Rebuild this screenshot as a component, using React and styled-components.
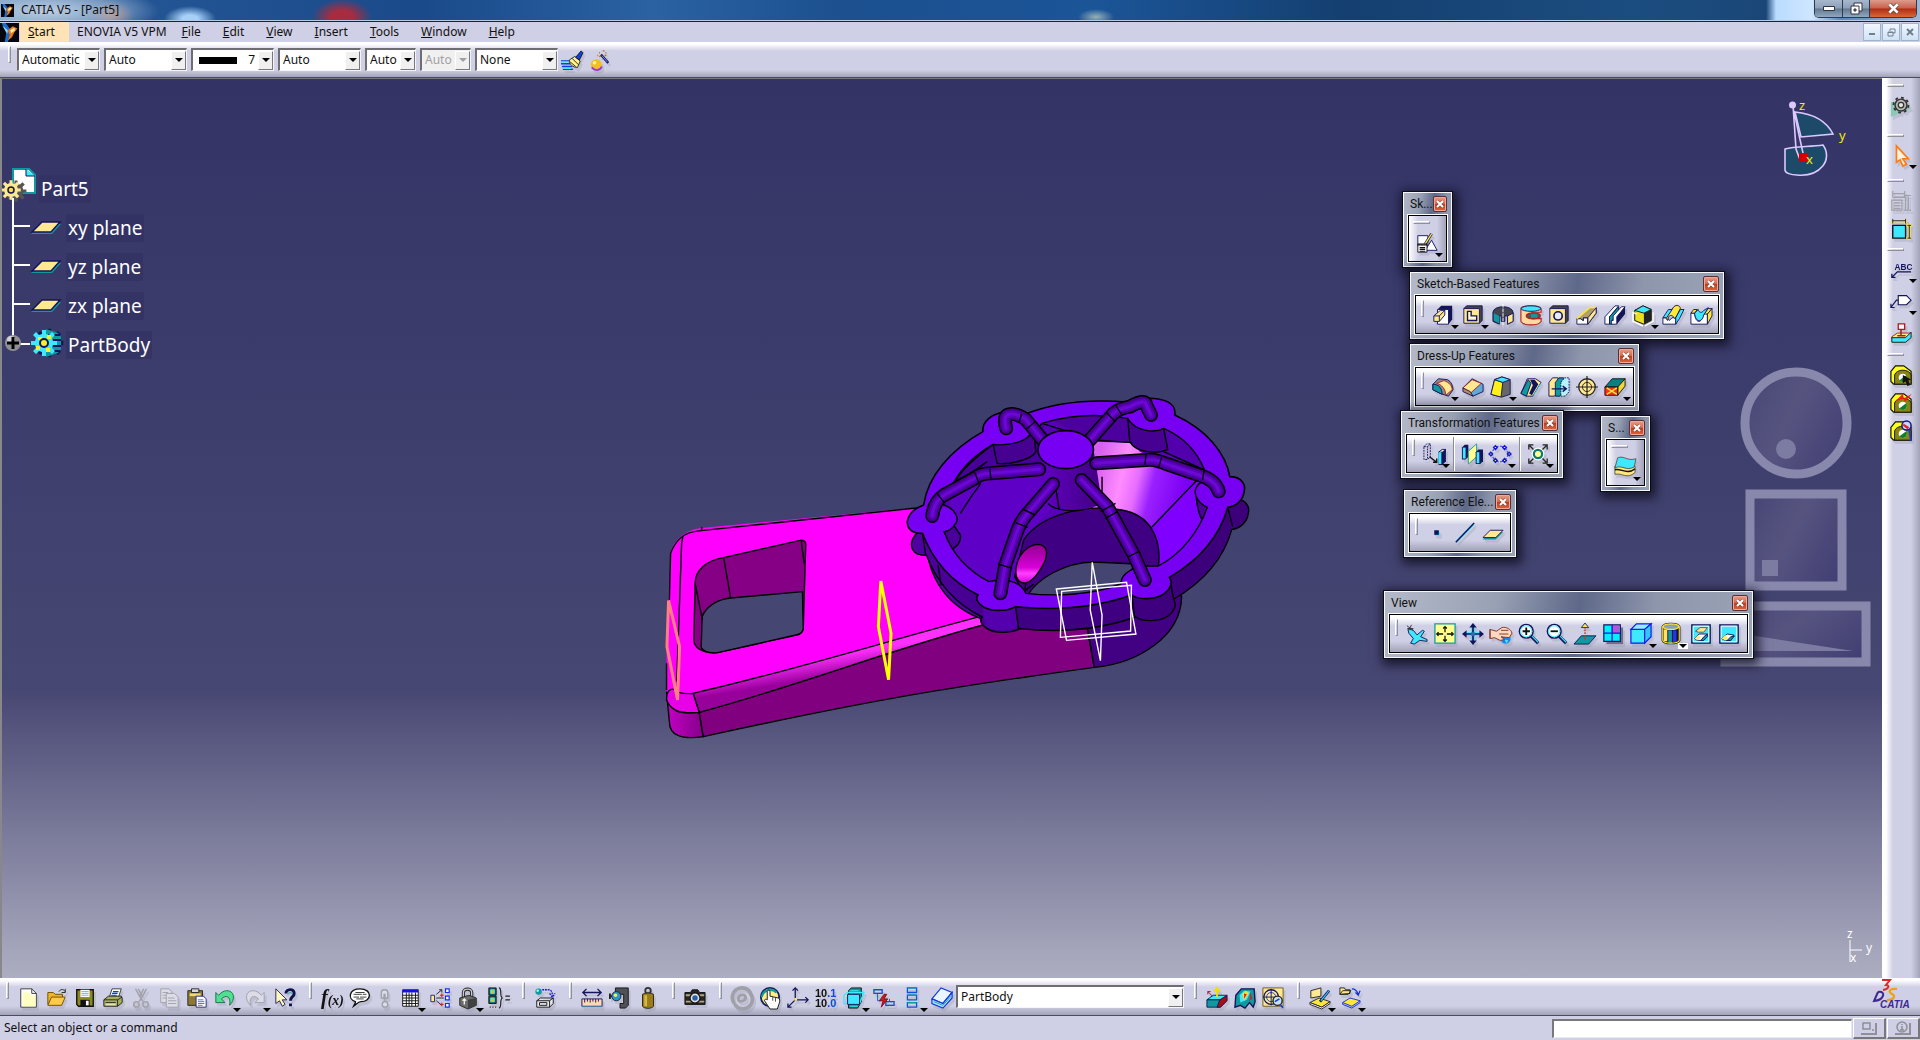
import React from 'react';
import styled, { createGlobalStyle, css } from 'styled-components';

const GlobalStyle = createGlobalStyle`
  * { box-sizing: border-box; }
  body {
    margin: 0;
    overflow: hidden;
    font-family: "Noto Sans", "Open Sans", sans-serif;
    font-size: 12px;
    color: #111;
  }
  button, select, input { font: inherit; color: inherit; }
`;

/* ---------- icons, all on a 24 x 24 grid ---------- */

const N = '#14145a';
const C = '#40e8ff';
const T = '#109aa0';
const Y = '#ffee88';
const G = '#a0a0a8';

const icons = {
  logo: (
    <>
      <path d="M0 0h24v24H0z" fill="#05070c" />
      <path d="M2 0h5l6 8-3 16H6L8 12z" fill="#1d6cd0" />
      <path d="M3 3l7 6-1 5z" fill="#8fd4ff" />
      <path d="M10 9l6-5 6 3-4 5-3 6-5 4 2-7z" fill="#e87a1c" />
      <path d="M13 9l5-3 1 3-5 4z" fill="#fff0b0" />
    </>
  ),
  newFile: (
    <>
      <path d="M3 2h12l5 5v15H3z" fill="#fff" stroke="#333" />
      <path d="M5 6h8v3h6v12H5z" fill="#ffffc0" />
      <path d="M15 2v5h5" fill="none" stroke="#333" />
    </>
  ),
  open: (
    <>
      <path d="M2 19V6h6l2 2h8v3" fill="#f0b428" stroke="#6b4a00" />
      <path d="M2 20l4-9h15l-4 9z" fill="#ffc94a" stroke="#6b4a00" />
      <path d="M14 5c2-3 5-3 7 0M21 2v4h-4" fill="none" stroke="#222" />
    </>
  ),
  save: (
    <>
      <path d="M3 3h18v18H5l-2-2z" fill="#8a8a1c" stroke="#111" strokeWidth="1.5" />
      <path d="M7 3h10v8H7z" fill="#fff" />
      <path d="M8 5h8M8 7h8M8 9h8" stroke="#6ab0e8" />
      <path d="M7 14h10v7H7z" fill="#111" />
      <path d="M13 15h3v5h-3z" fill="#fff" />
    </>
  ),
  print: (
    <>
      <path d="M8 11l3-9h10l-3 9z" fill="#fff" stroke="#333" />
      <path d="M12 5h6M11 7h6M10 9h6" stroke="#1238e0" strokeWidth="1.3" />
      <path d="M2 14l5-4h14l1 2v5l-5 4H2z" fill="#a8b060" stroke="#222" />
      <path d="M2 14h15l5-3M17 14v7M4 17h11" fill="none" stroke="#222" />
      <path d="M4 18h11v2H4z" fill="#e8e8a0" />
    </>
  ),
  cut: (
    <g fill="none" stroke={G} strokeWidth="1.5">
      <path d="M6 2l8 14M9 2l5 9M18 2l-8 14M15 2l-5 9" />
      <circle cx="7" cy="19" r="3" fill="#c4c4d0" />
      <circle cx="17" cy="19" r="3" fill="#c4c4d0" />
    </g>
  ),
  copy: (
    <g fill="#dcdce8" stroke={G}>
      <path d="M3 2h9l3 3v12H3z" />
      <path d="M9 7h9l4 4v11H9z" />
      <path d="M5 6h6M5 9h4M5 12h4M11 12h7M11 15h9M11 18h9" fill="none" />
    </g>
  ),
  paste: (
    <>
      <path d="M2 4h16v16H2z" fill="#8c7a34" stroke="#222" />
      <path d="M6 2h8v4H6z" fill="#d8d8d8" stroke="#222" />
      <path d="M4 7h12v3H4z" fill="#f0d878" />
      <path d="M11 10h8l3 3v9H11z" fill="#fff" stroke="#1c2880" />
      <path d="M13 14h6M13 16h7M13 18h7M13 20h5" stroke="#4a68d8" />
    </>
  ),
  undo: (
    <path d="M2 6v11h10l-4-4c5-5 11-3 9 7 7-7 5-16-3-16-4 0-7 3-9 5z" fill="#50e090" stroke="#147048" />
  ),
  redo: (
    <path d="M22 6v11H12l4-4c-5-5-11-3-9 7-7-7-5-16 3-16 4 0 7 3 9 5z" fill="#dcdce8" stroke={G} />
  ),
  whatsThis: (
    <>
      <path d="M2 2v16l4-3 3 6 3-2-3-5h5z" fill="#fff8c0" stroke="#20204a" />
      <path d="M13 7c0-5 9-6 9 0 0 4-4 3-4 8M18 18v3" fill="none" stroke="#10104a" strokeWidth="3.2" />
      <path d="M15 8c1-3 5-2 5 0" fill="none" stroke={T} />
    </>
  ),
  fx: (
    <text x="0" y="18" fontFamily="Liberation Serif, serif" fontStyle="italic" fontWeight="700" fontSize="22" fill="#111">
      f<tspan fontSize="15" dy="2">(x)</tspan>
    </text>
  ),
  bubble: (
    <>
      <path d="M12 2c14 0 13 14 1 14-3 0-5 3-8 5 1-2 2-3 2-5C-2 13 0 2 12 2z" fill="#fff" stroke="#111" strokeWidth="1.5" />
      <path d="M7 6h10M5 8h9M15 8h4M5 11h6M12 11h7M8 13h8" stroke="#333" />
    </>
  ),
  link: (
    <g fill="#dcdce8" stroke={G} strokeWidth="1.5">
      <path d="M8 12V6c0-4 7-4 7 0v6h-3V8h-1v4z" />
      <circle cx="12" cy="19" r="3" />
      <path d="M12 12v4" />
    </g>
  ),
  table: (
    <>
      <path d="M4 3h17v18H4z" fill="#fff" stroke="#111" />
      <path d="M4 3h17v3H4z" fill="#1010f0" />
      <path d="M4 9h17M4 12h17M4 15h17M4 18h17M8 6v15M11 6v15M14 6v15M18 6v15" stroke="#111" />
    </>
  ),
  relations: (
    <>
      <path d="M2 9h4v7H2z" fill="#ffee88" stroke="#20208a" />
      <path d="M18 2h4v4h-4zM18 10h4v4h-4zM18 18h4v4h-4z" fill="#fff" stroke="#1030e8" strokeWidth="1.3" />
      <path d="M8 8l6-5M11 3h3v3M8 12h8M8 15l6 5" fill="none" stroke="#222" />
      <path d="M12 9h4M14 7v4M12 19h4M14 17v4" stroke="#d01010" />
    </>
  ),
  lock: (
    <>
      <path d="M7 12V6c0-5 9-5 9 0v5" fill="none" stroke="#222" strokeWidth="3.5" />
      <path d="M7 12V6c0-5 9-5 9 0v5" fill="none" stroke="#ccc" strokeWidth="1.5" />
      <path d="M3 12l10-3 8 3v8l-9 4-9-4z" fill="#6c6c6c" stroke="#222" />
      <path d="M12 14v10l9-4v-8z" fill="#404040" />
      <path d="M8 14v5M6 15l2-2 2 2" fill="none" stroke="#eee" strokeWidth="1.5" />
    </>
  ),
  brace: (
    <>
      <path d="M2 1h8v8H2zM2 10h8v8H2z" fill="#186868" stroke="#111" />
      <path d="M4 3h4v4H4zM4 12h4v4H4z" fill="#e8c020" stroke={C} />
      <path d="M3 22h1M6 22h1M9 22h1" stroke="#111" strokeWidth="1.5" />
      <path d="M13 1c4 0 0 10 4 11-4 1 0 10-4 11M20 10h5M20 14h5" fill="none" stroke="#222" strokeWidth="1.3" />
    </>
  ),
  catalog: (
    <>
      <circle cx="5" cy="5" r="3.5" fill={T} />
      <circle cx="4" cy="4" r="1.3" fill="#b0ffff" />
      <path d="M9 3h6c4 0 5 2 5 7M17 7l3 4 3-4" fill="none" stroke="#1010e0" strokeWidth="1.4" strokeDasharray="2 1" />
      <path d="M3 15l4-3h14v6l-4 4H3zM3 15h14l4-3M17 15v7M6 17h8v3H6z" fill="#e8e8f0" stroke="#111" />
    </>
  ),
  ruler: (
    <>
      <path d="M2 6h20M6 2L2 6l4 4M18 2l4 4-4 4" fill="none" stroke={N} strokeWidth="1.4" />
      <path d="M1 13h22v8H1z" fill="#ffd8b8" stroke={N} />
      <path d="M4 13v4M7 13v3M10 13v4M13 13v3M16 13v4M19 13v3" stroke={N} />
      <path d="M1 22h22" stroke={C} />
    </>
  ),
  clamp: (
    <>
      <path d="M7 1h14v19l-3 3h-6v-5h4V8H7z" fill="#505058" stroke="#111" />
      <path d="M1 10h5M1 7v6" stroke="#222" strokeWidth="2" />
      <circle cx="8" cy="10" r="5" fill="#2898c8" stroke="#223" />
      <circle cx="7" cy="9" r="2" fill="#ffe860" />
    </>
  ),
  weight: (
    <>
      <circle cx="12" cy="4" r="3" fill="none" stroke="#333" strokeWidth="2" />
      <path d="M6 8c2-2 10-2 12 0v13c-2 3-10 3-12 0z" fill="#9a7c18" stroke="#222" />
      <path d="M8 9h3v12H8z" fill="#d8b840" />
    </>
  ),
  camera: (
    <>
      <path d="M1 6h6l2-3h6l2 3h6v13H1z" fill="#26262a" stroke="#111" />
      <path d="M2 8h20v2H2zM2 15h20v2H2z" fill="#b0a878" />
      <circle cx="12" cy="12" r="5.500" fill="#e0e0e8" stroke="#111" strokeWidth="1.4" />
      <circle cx="12" cy="12" r="3" fill="#2a60a8" />
    </>
  ),
  update: (
    <g fill="none" stroke={G} strokeLinecap="round">
      <path d="M3 17A10 10 0 0 1 21 6M21 7A10 10 0 0 1 5 20" strokeWidth="4" />
      <path d="M8 13c0-5 7-6 8-2M16 11c0 5-7 6-8 3" strokeWidth="3" />
    </g>
  ),
  hand: (
    <>
      <circle cx="12" cy="11" r="10" fill="#ffee88" stroke="#18205a" strokeWidth="2" />
      <path d="M3 11c1-7 10-11 16-5" fill="none" stroke={T} strokeWidth="2.5" />
      <path d="M9 14V5c0-2 3-2 3 0v5l9 2c2 1 2 3 1 6l-2 6h-8l-6-9c0-2 2-2 3-1z" fill="#fff" stroke="#111" />
      <path d="M15 11v4M18 12v4" stroke="#444" />
    </>
  ),
  axis: (
    <>
      <path d="M9 14V1M6 4l3-3 3 3M9 14h14M20 11l3 3-3 3M9 14l-8 8M1 18v4h4" fill="none" stroke={N} strokeWidth="1.4" />
      <path d="M8 12h3v3H8z" fill="#ffe860" />
    </>
  ),
  decimals: (
    <g fontFamily="Liberation Sans, sans-serif" fontWeight="700" fontSize="12">
      <text x="0" y="11" fill="#111">10<tspan fill="#1048d8">.1</tspan></text>
      <text x="0" y="22" fill="#111">10<tspan fill="#1048d8">.0</tspan></text>
    </g>
  ),
  cyanPart: (
    <>
      <path d="M6 4l3-3h11v15l-4 7H6z" fill={T} stroke="#111" />
      <path d="M1 9l4-3h18l-5 12H1z" fill="none" stroke={C} strokeWidth="1.4" />
      <path d="M5 8h13v11H5z" fill={C} stroke={N} />
      <path d="M8 4h9M16 21H8" stroke={C} />
    </>
  ),
  bolt: (
    <>
      <path d="M1 3h9v4H1zM14 16h9v4h-9z" fill="none" stroke="#1050c8" strokeWidth="1.4" />
      <path d="M5 7v8h4M18 16v-3" fill="none" stroke="#1050c8" />
      <path d="M12 8l-5 7h4l-2 7 7-9h-4l3-5z" fill="#d81818" stroke="#701010" />
    </>
  ),
  stack: (
    <g fill="none" stroke="#1050e0" strokeWidth="1.4">
      <path d="M7 1h10v5H7zM7 9h10v5H7zM7 17h10v5H7z" />
      <path d="M7 1h10M7 9h10M7 17h10" stroke={T} />
    </g>
  ),
  book: (
    <>
      <path d="M1 13L11 1l12 5-10 12z" fill="#e8f4ff" stroke="#1038e0" strokeWidth="1.3" />
      <path d="M1 13v5l12 5 10-11V6L13 18 1 13" fill="#b8e8f8" stroke="#1038e0" strokeWidth="1.3" />
      <path d="M3 16l10 4 9-10" fill="none" stroke={T} />
    </>
  ),
  draft1: (
    <>
      <path d="M1 14l7-5h15l-6 5z" fill={C} stroke={N} />
      <path d="M1 14h14v8H1z" fill={T} stroke={N} />
      <path d="M12 22l3-8 8-5v6l-7 7z" fill="#a01018" stroke={N} />
      <path d="M12 11V2M9 5l3-4 3 4" fill="none" stroke="#f0e000" strokeWidth="2" />
      <path d="M7 10L2 5M2 8V5h3" fill="none" stroke="#a01018" />
    </>
  ),
  curvature: (
    <>
      <path d="M2 9l6-7h14l1 14-2 6-4-5-5 6-5-3-6 2z" fill={T} stroke={N} strokeWidth="1.5" />
      <path d="M6 9l5-5 7 1-4 9-7 3z" fill={C} />
      <path d="M9 8l4-4 3 3-5 8z" fill="#ffe030" />
      <path d="M11 7l3 1-3 5zM18 5l2 8-3 2z" fill="#d82020" />
    </>
  ),
  tap: (
    <>
      <path d="M1 1h22v20H1z" fill="#ffe890" stroke="#6a5a20" />
      <circle cx="10" cy="11" r="8" fill="none" stroke={N} strokeWidth="1.4" />
      <circle cx="10" cy="11" r="5" fill="none" stroke="#1040e0" />
      <path d="M10 2v18M1 11h18" stroke={N} />
      <circle cx="17" cy="15" r="5" fill="#c8e0f0" stroke="#222" strokeWidth="1.5" />
      <path d="M14 16l5-3M20 19l3 4" stroke="#1040e0" strokeWidth="1.8" />
    </>
  ),
  paint: (
    <>
      <path d="M2 12V4l11-3v9z" fill="#ffe890" stroke="#222" />
      <path d="M1 17l10-5 12 4-9 6z" fill="#ffe838" stroke="#222" />
      <path d="M1 17v2l13 5 9-6v-2l-9 6z" fill="#fff" stroke="#222" />
      <path d="M12 16l10-12" stroke={N} strokeWidth="3" />
      <path d="M13 15l9-11" stroke="#30c0f0" strokeWidth="1.3" />
    </>
  ),
  replace: (
    <>
      <path d="M1 8V1h5l1 2h5v4zM1 8l3-4h9l-3 4z" fill="#ffe890" stroke="#222" />
      <path d="M14 2c4 0 6 3 7 6M18 6l3 3 2-5" fill="none" stroke="#1030d8" strokeWidth="1.3" />
      <path d="M4 17l8-5 11 3-9 6z" fill="#ffe838" stroke="#1030d8" />
      <path d="M4 17v2l10 4 9-6v-2" fill="none" stroke="#1030d8" />
    </>
  ),
  brush: (
    <>
      <path d="M0 12h11M0 15h10M1 18h11M2 21h11" stroke="#1040e0" strokeWidth="1.4" />
      <path d="M0 13h9M2 20h9" stroke={C} strokeWidth="1.4" />
      <path d="M9 11l6-4 6 5-3 7c-5 0-9-3-9-8z" fill="#fff090" stroke="#222" />
      <path d="M12 9l7 7M10 13l6 5" stroke="#222" />
      <path d="M16 8l6-7 2 2-4 8z" fill="#1040e0" stroke="#111" />
    </>
  ),
  wand: (
    <>
      <circle cx="8" cy="16" r="6" fill="#f0c020" />
      <circle cx="6" cy="14" r="2" fill="#fff490" />
      <path d="M3 19c3 4 9 4 11-1" fill="none" stroke="#a030e0" strokeWidth="2" />
      <path d="M13 5l8 9" stroke={N} strokeWidth="2.6" />
      <path d="M14 6l6 7" stroke="#78a0ff" />
      <path d="M11 3h1M15 1h2M18 3h1M13 7h-2M17 6h2M10 6h-1" stroke="#c07030" strokeWidth="1.5" />
    </>
  ),
  sketch: (
    <>
      <path d="M2 4h11v11H2z" fill="#fff" stroke={N} />
      <path d="M17 9l6 11H10z" fill="#fff" stroke={N} />
      <path d="M10 13l7-11" stroke="#222" strokeWidth="3" />
      <path d="M10 13l7-11" stroke="#ffe870" strokeWidth="1.3" />
      <path d="M2 13h10v9H2z" fill="#fff" stroke="#111" />
      <path d="M2 14h10M4 17h6M4 19h6M4 21h6" stroke="#111" strokeWidth="1.3" />
    </>
  ),
  pad: (
    <>
      <path d="M6 6l4-4h12v15l-4 5z" fill={N} />
      <path d="M6 6h12v16H6z" fill="#fff" stroke={N} />
      <path d="M2 13l7-6h5v5l-6 7H2z" fill="#ffe890" stroke={N} />
      <path d="M2 13h6v6M8 13l6-6" fill="none" stroke={N} />
    </>
  ),
  pocket: (
    <>
      <path d="M2 5l3-3h17v16l-3 3z" fill="#444" stroke={N} />
      <path d="M2 5h17v16H2z" fill="#ffe890" stroke={N} />
      <path d="M6 8h4v5h6v5H6z" fill="#fff8c8" stroke={N} strokeWidth="1.5" />
    </>
  ),
  shaft: (
    <>
      <path d="M1 9c1-8 21-8 22 0v10l-6 3v-9h-3v6h-4v-6H8v9l-7-3z" fill="#444450" stroke={N} />
      <path d="M2 10l6 3v8l-6-3z" fill={T} />
      <path d="M17 13l6-3v9l-6 3z" fill="#ffe890" stroke={N} />
      <path d="M12 0v23" stroke="#fff" strokeDasharray="4 1" />
    </>
  ),
  groove: (
    <>
      <path d="M1 5c2-4 20-4 22 0v4H13v7h10v3c-3 5-19 5-22 0z" fill="#ffd8a0" stroke="#b02020" strokeWidth="1.2" />
      <path d="M1 5c2-4 20-4 22 0-2 4-20 4-22 0z" fill={C} stroke={N} />
      <path d="M7 12c3-3 12-3 15 0v2c-3 3-12 3-15 0z" fill="#555" stroke="#b02020" strokeWidth="1.3" />
      <path d="M12 11h7v4h-7z" fill={T} />
    </>
  ),
  hole: (
    <>
      <path d="M2 5l3-3h17v16l-3 3z" fill="#444" stroke={N} />
      <path d="M2 5h17v16H2z" fill="#ffe890" stroke={N} />
      <circle cx="11" cy="13" r="4.5" fill="#e8e8ff" stroke={N} strokeWidth="1.8" />
    </>
  ),
  rib: (
    <>
      <path d="M1 16h4l3 2v-3h5v7H1z" fill="#fff" stroke={N} />
      <path d="M1 16L15 4h7v6l-9 12v-7H8v3l-3-2z" fill="#b0a068" stroke={N} />
      <path d="M1 16L15 4h7" stroke="#ffe838" strokeWidth="1.8" fill="none" />
      <path d="M13 15l9-11v6l-9 12z" fill="#ffe890" stroke={N} />
    </>
  ),
  slot: (
    <>
      <path d="M1 14L12 2h4L6 14v8H1z" fill="#fff" stroke={N} />
      <path d="M6 14L16 3v5L9 18v4H6z" fill={T} stroke={N} />
      <path d="M10 13l9-10h4L14 14v8H8v-4h2z" fill="#fff" stroke={N} />
      <path d="M14 14l9-11v8l-9 11z" fill={N} />
    </>
  ),
  stiffener: (
    <>
      <path d="M3 7l9-5 9 4v12l-8 4-10-4z" fill="#e8e020" stroke="#111" />
      <path d="M3 7l9-5 9 4-8 4z" fill={C} stroke="#111" />
      <path d="M13 10l8-4v12l-8 4z" fill="#222" />
      <path d="M1 9v10l11 5M23 9v10l-9 5M1 9l4 2" fill="none" stroke="#fff" strokeWidth="1.5" />
    </>
  ),
  loftAdd: (
    <>
      <path d="M1 15h5l2 3 3-3h4v7H1z" fill="#fff" stroke={N} />
      <path d="M4 15L13 3c3-3 7-1 7 2l-4 8-2 3c-3-5-7-5-8 2z" fill="#ffe838" stroke={N} />
      <path d="M15 15l5-9h4l-5 10-4 6zM1 15l6-9h4l-6 9z" fill={C} stroke={N} />
    </>
  ),
  loftCut: (
    <>
      <path d="M1 10h4c1 12 8 12 10 0h4v12H1z" fill="#fff" stroke={N} />
      <path d="M1 10l3-4h4l-3 4zM15 11l5-6h4l-5 6z" fill="#ffe838" stroke={N} />
      <path d="M19 11l5-6v8l-5 9z" fill="#ffe838" stroke={N} />
      <path d="M5 10l4-4c1 4 4 4 6 1l5-3-5 8c-2 9-9 8-10-2z" fill={C} stroke={N} />
    </>
  ),
  fillet: (
    <>
      <path d="M1 9l6-6 10 1c4 2 6 7 6 11l-5 7-9-3-8-4z" fill="#8c8c90" stroke={N} />
      <path d="M1 9c7 0 10 5 10 11l-10-5z" fill={T} stroke={N} />
      <path d="M5 8l8-3c6 2 9 6 9 10l-7 6c0-7-5-12-10-13z" fill="#ffe890" stroke="#b02020" />
    </>
  ),
  chamfer: (
    <>
      <path d="M1 13L11 3l12 6v8l-11 5z" fill="#60a8d8" stroke={N} />
      <path d="M1 13L11 4l10 4-12 11z" fill="#ffe890" stroke="#b02020" />
      <path d="M1 13l8 4 3 5-11-5z" fill="#c08858" stroke={N} />
    </>
  ),
  draftAngle: (
    <>
      <path d="M5 4l8-3 9 3v16l-9 3-12-3z" fill="#666" stroke={N} />
      <path d="M5 4l9 3-2 16-11-3z" fill="#fff018" stroke={N} />
      <path d="M5 4l8-3 9 3-8 3z" fill={C} stroke={N} />
    </>
  ),
  shell: (
    <>
      <path d="M1 19L8 3h9l6 4-9 15H7z" fill="#ffe890" stroke={N} />
      <path d="M1 19L9 4l3 4-5 14z" fill={T} stroke={N} />
      <path d="M11 4h5l4 5-7 12-3-2 4-9z" fill={N} />
      <path d="M15 21l8-13" stroke={C} />
    </>
  ),
  thickness: (
    <>
      <path d="M1 7l4-5h6v15l-4 5H1z" fill="#ffe890" stroke={N} />
      <path d="M8 7l4-5h5v15l-4 5H8z" fill={T} stroke={N} />
      <path d="M14 7l4-5h5v15l-4 5h-5z" fill="#b8f0ff" stroke={N} strokeDasharray="2 1" />
      <path d="M4 14h16M16 11l4 3-4 3" fill="none" stroke={N} strokeWidth="1.5" />
    </>
  ),
  thread: (
    <>
      <circle cx="12" cy="12" r="9" fill="#ffe890" stroke="#222" strokeWidth="1.4" />
      <circle cx="12" cy="12" r="5" fill="none" stroke="#222" />
      <path d="M12 0v24M0 12h24" stroke="#222" strokeWidth="1.3" />
    </>
  ),
  removeFace: (
    <>
      <path d="M1 12l8-9h14l-7 9z" fill="#0a8080" stroke="#111" />
      <path d="M15 12l8-9v8l-8 10z" fill="#f0d838" stroke="#111" />
      <path d="M1 12h14v9H1z" fill="#ff3018" stroke="#111" />
      <path d="M3 13l11 7M14 13L3 20" stroke="#ffe838" strokeWidth="1.5" />
    </>
  ),
  translate: (
    <>
      <path d="M1 4l3-3h4v14l-3 3H1zM1 4h4v14M5 4l3-3" fill="none" stroke={N} strokeDasharray="2 1" />
      <path d="M17 10l4-3h4v13l-4 4h-4z" fill={N} />
      <path d="M17 10l4-3h4l-4 3z" fill="#fff" stroke={N} />
      <path d="M17 10h3v13h-3z" fill={C} />
      <path d="M7 15l8 6M15 17v4h-4" fill="none" stroke="#111" strokeWidth="1.5" />
    </>
  ),
  mirror: (
    <>
      <path d="M1 5l3-3h4v13l-3 3H1z" fill={N} />
      <path d="M2 5h3v12H2z" fill={C} />
      <path d="M8 9l9-8v14l-9 8z" fill="#ffff90" stroke={T} />
      <path d="M16 10l3-3h5v13l-3 3h-5z" fill={N} />
      <path d="M17 10h3v12h-3z" fill={C} />
    </>
  ),
  pattern: (
    <>
      <circle cx="12" cy="12" r="8.5" fill="none" stroke="#1018d0" strokeDasharray="3 2" />
      <g fill="#ffee60" stroke="#1018d0" strokeWidth="1.5">
        <path d="M2 10l2 2-2 2-2-2zM22 10l2 2-2 2-2-2zM7 3l2 2-2 2-2-2zM17 3l2 2-2 2-2-2zM7 17l2 2-2 2-2-2zM17 17l2 2-2 2-2-2z" />
      </g>
    </>
  ),
  scale: (
    <>
      <path d="M3 3l18 18M21 3L3 21M2 7V2h5M17 2h5v5M22 17v5h-5M7 22H2v-5" fill="none" stroke="#222" strokeWidth="1.4" />
      <circle cx="12" cy="12" r="7" fill="#fff" />
      <circle cx="12" cy="12" r="4.500" fill="#ffff90" stroke="#087878" strokeWidth="2.4" />
    </>
  ),
  surface: (
    <>
      <path d="M1 11c7-3 11 6 22 0v7c-9 8-14 0-22 2z" fill="#ffe878" stroke="#555" />
      <path d="M4 2c7-3 10 4 20 1l-2 9c-9 5-13-3-21 1z" fill={C} stroke="#555" />
      <path d="M1 15c7-2 12 6 22-1" fill="none" stroke="#111" strokeWidth="1.5" />
    </>
  ),
  point: (
    <>
      <path d="M10 10h5v5h-5z" fill={C} />
      <path d="M9 9h5v5H9z" fill={N} />
    </>
  ),
  line: (
    <>
      <path d="M3 21L21 3" stroke={C} strokeWidth="2.6" />
      <path d="M2 22L22 1" stroke={N} strokeWidth="1.6" />
    </>
  ),
  plane: (
    <>
      <path d="M1 19l8-8h14l-8 8z" fill={T} />
      <path d="M1 17l8-8h14l-8 8z" fill="#ffe890" stroke={N} />
    </>
  ),
  fly: (
    <>
      <path d="M2 6l6 2 4 5 6-5 2 1-4 6 7 3v2l-8-1-6 4-4-1 3-5-5-6z" fill={C} stroke={N} />
      <path d="M1 3l7 5M6 2L3 8M2 6h6" stroke="#333" />
    </>
  ),
  fitAll: (
    <>
      <path d="M1 1h22v21H1z" fill="#ffff90" stroke={T} strokeWidth="1.4" />
      <path d="M12 4v6M10 6l2-2 2 2M12 14v6M10 18l2 2 2-2M3 12h7M5 10l-2 2 2 2M14 12h7M19 10l2 2-2 2" fill="none" stroke="#111" strokeWidth="1.4" />
    </>
  ),
  pan: (
    <>
      <path d="M12 2v20M2 12h20" stroke={C} strokeWidth="4" />
      <path d="M12 2v20M2 12h20" stroke={N} strokeWidth="1.8" />
      <path d="M12 0l4 5H8zM12 24l4-5H8zM0 12l5-4v8zM24 12l-5-4v8z" fill={N} />
      <path d="M10 10h4v4h-4z" fill="#3070b0" />
    </>
  ),
  rotate: (
    <>
      <circle cx="17" cy="17" r="5.5" fill="#1888f0" />
      <path d="M0 7l7 2 6-4c5-1 10 2 11 6l-3 5-9-1 4 3-5 1-6-3-5 1z" fill="#ffd8c0" stroke="#7a3020" />
      <path d="M10 12h10M12 8h8M0 7v10" stroke="#7a3020" />
      <path d="M16 18l4 1-2 3z" fill="#60e8f0" />
    </>
  ),
  zoomIn: (
    <>
      <path d="M14 14l8 8" stroke={N} strokeWidth="3.6" />
      <path d="M15 14l7 7" stroke={C} strokeWidth="1.2" />
      <circle cx="9" cy="9" r="7.500" fill="#fff" stroke={N} strokeWidth="1.6" />
      <circle cx="9" cy="9" r="6" fill="none" stroke={C} />
      <path d="M5 9h8M9 5v8" stroke="#111" strokeWidth="2" />
    </>
  ),
  zoomOut: (
    <>
      <path d="M14 14l8 8" stroke={N} strokeWidth="3.6" />
      <path d="M15 14l7 7" stroke={C} strokeWidth="1.2" />
      <circle cx="9" cy="9" r="7.500" fill="#fff" stroke={N} strokeWidth="1.6" />
      <circle cx="9" cy="9" r="6" fill="none" stroke={C} />
      <path d="M5 9h8" stroke="#111" strokeWidth="2" />
    </>
  ),
  normalView: (
    <>
      <path d="M0 23l8-9h16l-8 9z" fill={T} stroke={N} />
      <path d="M12 18V4" stroke="#d03020" strokeDasharray="2 1" strokeWidth="1.4" />
      <path d="M12 0l4 5H8z" fill="#ffe838" stroke="#1018d0" />
    </>
  ),
  multiView: (
    <>
      <path d="M5 5h18v18H5z" fill="#70708a" />
      <path d="M2 2h18v18H2z" fill="#00f0ff" stroke={N} strokeWidth="1.3" />
      <path d="M11 3h8v8h-8z" fill="#c050d8" />
      <path d="M11 2v18M2 11h18" stroke="#1018d0" strokeWidth="1.4" />
    </>
  ),
  isoView: (
    <g stroke="#1018f0" strokeWidth="1.3">
      <path d="M1 7h15v15H1z" fill={C} />
      <path d="M1 7l6-6h16l-7 6z" fill="#90f0ff" />
      <path d="M16 7l7-6v14l-7 7z" fill="#30c8f0" />
    </g>
  ),
  shading: (
    <>
      <path d="M3 4c2-4 16-4 18 0v15c-2 4-16 4-18 0z" fill="#101048" stroke="#111" strokeWidth="2.5" />
      <path d="M3 4c2-4 16-4 18 0-2 4-16 4-18 0z" fill="#88a0c0" stroke="#ffe838" strokeWidth="1.4" />
      <path d="M4 7h4v13H4z" fill="#ffe060" />
      <path d="M9 8h4v14H9z" fill={T} />
      <path d="M14 8h4v13h-4z" fill="#2038e0" />
      <path d="M3 4v15c2 4 16 4 18 0V4" fill="none" stroke="#ffe838" strokeWidth="1.2" />
    </>
  ),
  hideShow: (
    <>
      <path d="M2 2h20v20H2z" fill={C} stroke={N} strokeWidth="1.5" />
      <path d="M3.500 3.500h17v17h-17z" fill="none" stroke="#fff" />
      <path d="M6 9l5-4h8l-4 5H9z" fill="#ffe890" stroke="#555" />
      <path d="M5 17l5-5h9l-5 7H8z" fill="#fff" stroke={N} />
      <path d="M12 19l3-4 4-3v3l-4 4z" fill={T} stroke={N} />
      <path d="M5 17l4-4 3 2-3 4z" fill="#ffe890" />
    </>
  ),
  swapSpace: (
    <>
      <path d="M2 2h20v20H2z" fill={C} stroke={N} strokeWidth="1.5" />
      <path d="M3.500 3.500h17v17h-17z" fill="none" stroke="#fff" />
      <path d="M4 17l6-5 7 1-3 6H8z" fill="#fff" stroke={N} />
      <path d="M10 19l4-4 4-1-4 5z" fill={T} stroke={N} />
      <path d="M4 17l4-4 3 3-3 3z" fill="#ffee60" />
    </>
  ),
  gear: (
    <>
      <path d="M1 7l23 7-23 10z" fill="#8cc8b8" />
      <circle cx="12" cy="11" r="6.500" fill="#b8b8b0" stroke="#333" strokeWidth="1.6" />
      <circle cx="12" cy="11" r="8.200" fill="none" stroke="#333" strokeWidth="2" strokeDasharray="3 3.400" />
      <circle cx="12" cy="11" r="3" fill="#e0e8e4" stroke="#333" strokeWidth="1.4" />
    </>
  ),
  select: (
    <path d="M7 1v18l4-3 3 7 4-2-4-6h6z" fill="#fff0e0" stroke="#ff7a10" strokeWidth="1.8" />
  ),
  dimGray: (
    <g fill="none" stroke={G} strokeWidth="1.3">
      <path d="M3 1v7M16 1v7M3 4h13M15 6h8M15 22h8M20 7v14M17 8v14" />
      <path d="M3 8h14M2 11h11v11H2zM4 14h7M4 17h7M4 20h7" />
    </g>
  ),
  dim: (
    <>
      <path d="M3 8h14v14H3z" fill={C} stroke="#111" strokeWidth="1.5" />
      <path d="M3 1v5M17 1v5M3 3h14M21 8v14M18 8h5M18 22h5" fill="none" stroke="#ffe838" strokeWidth="3" />
      <path d="M3 1v5M17 1v5M3 3h14M21 8v14M19 8h4M19 22h4" fill="none" stroke={N} />
    </>
  ),
  abc: (
    <>
      <text x="5" y="12" fontFamily="Liberation Sans, sans-serif" fontWeight="700" fontSize="9" fill={N}>ABC</text>
      <path d="M23 14H8l-6 6M2 16v4h4" fill="none" stroke={N} strokeWidth="1.4" />
    </>
  ),
  flag: (
    <>
      <path d="M9 5h9l5 5-5 5H9z" fill="#fff" stroke={N} strokeWidth="1.2" />
      <path d="M9 10H7l-6 8M1 14v4h4" fill="none" stroke={N} strokeWidth="1.3" />
    </>
  ),
  stamp: (
    <>
      <path d="M2 15l6-4h15l-6 6H2z" fill={Y} stroke="#b01818" />
      <path d="M2 16h15l6-6v6l-6 5H2z" fill={C} stroke="#111" />
      <path d="M9 1h7v6H9z" fill="#fff" stroke="#b01818" strokeWidth="1.4" />
      <path d="M12 7v6M8 14h9" stroke="#b01818" strokeWidth="1.6" />
    </>
  ),
  tape: (
    <>
      <path d="M1 8l5-6h9l8 6v14H4l-3-3z" fill="#ffff20" stroke="#111" strokeWidth="1.3" />
      <path d="M5 22V12c2-7 16-7 18 0v10z" fill="#8a8410" stroke="#111" />
      <circle cx="14" cy="15" r="4.500" fill="#fff" />
      <path d="M10 18l8-6c2 6-3 10-8 6z" fill="#108028" />
    </>
  ),
};

icons.tapeSelect = (
  <>
    {icons.tape}
    <path d="M14 12l9 5-3 1 2 5-3 1-2-5-3 2z" fill="#111" />
  </>
);
icons.tapeBolt = (
  <>
    {icons.tape}
    <path d="M6 10l8-8 1 5 9-5-8 9-1-4z" fill="#ff1818" />
  </>
);
icons.tapeLens = (
  <>
    {icons.tape}
    <circle cx="18" cy="6" r="5" fill="#c8d8f8" stroke="#101890" strokeWidth="1.6" />
    <path d="M15 4l6 4-2 2-5-4z" fill="#e82020" />
    <path d="M21 11l2 12" stroke="#2038c0" strokeWidth="2" />
  </>
);

const Icon = ({ name, size = 22 }) => (
  <svg width={size} height={size} viewBox="0 0 24 24" aria-hidden="true">
    {icons[name]}
  </svg>
);

/* ---------- frame ---------- */

const Screen = styled.div`
  display: flex;
  flex-direction: column;
  height: 100vh;
  background: #cfcfe5;
`;

const TitleBar = styled.header`
  display: flex;
  align-items: flex-start;
  height: 22px;
  padding-right: 3px;
  border-bottom: 1px solid #15233f;
  box-shadow: inset 0 -1px #b9cbe4;
  background:
    radial-gradient(ellipse 110px 24px at 50px 11px, rgba(205, 219, 235, 0.85), rgba(180, 200, 225, 0.5) 60%, transparent),
    radial-gradient(ellipse 22px 14px at 112px 15px, rgba(205, 125, 85, 0.8), transparent),
    radial-gradient(ellipse 26px 13px at 190px 19px, #a5d0f8 30%, transparent),
    radial-gradient(ellipse 30px 18px at 342px 17px, #a82c40 35%, transparent),
    radial-gradient(ellipse 18px 8px at 1096px 17px, rgba(180, 200, 190, 0.8), transparent),
    linear-gradient(90deg, transparent 1766px, #b9dcff 1776px, #cfe6ff 1812px, #5e86b8 1840px, #9db8d6 100%),
    linear-gradient(90deg, #6c93bd, #235493 8%, #1a4a8a 22%, #2a62a2 34%, #1c508f 44%, #1b5598 57%, #143f70 70%, #1c4d80 85%, #173f6d);
`;

const TitleText = styled.h1`
  flex: 1;
  margin: 0;
  font-size: 12px;
  line-height: 20px;
  font-weight: 400;
`;

const LogoBox = styled.span`
  display: flex;
  padding: 4px 7px 0 1px;
`;

const FrameButtons = styled.div`
  display: flex;
  height: 18px;
  border: 1px solid #2c3a50;
  border-top: 0;
  border-radius: 0 0 5px 5px;
  overflow: hidden;
`;

const FrameButton = styled.button`
  display: flex;
  align-items: center;
  justify-content: center;
  width: ${(p) => (p.$close ? 47 : 27)}px;
  padding: 0;
  border: 0;
  border-left: ${(p) => (p.$first ? 0 : 1)}px solid #2c3a50;
  background: ${(p) =>
    p.$close
      ? 'linear-gradient(#dc9c8c, #c8604c 48%, #b02c14 52%, #d86838)'
      : 'linear-gradient(#a8b8cc, #8ca0b8 48%, #62788f 52%, #90a8c0)'};
`;

const MenuBar = styled.nav`
  display: flex;
  align-items: center;
  height: 20px;
  padding-right: 1px;
`;

const MenuLogo = styled.span`
  display: flex;
  width: 20px;
`;

const MenuItem = styled.button`
  height: 20px;
  padding: 0 ${(p) => (p.$tight ? 7 : 14)}px 0 8px;
  border: 0;
  line-height: 20px;
  background: ${(p) => (p.$active ? '#ffe2b5' : 'transparent')};
`;

const ChildButtons = styled.div`
  display: flex;
  gap: 1px;
  margin-left: auto;
`;

const ChildButton = styled.button`
  display: flex;
  align-items: center;
  justify-content: center;
  width: 18px;
  height: 18px;
  padding: 0;
  border: 1px solid #9cb4cc;
  background: linear-gradient(#f0f7ff, #cfe2f4);
`;

const Strip = styled.div`
  display: flex;
  align-items: center;
  height: ${(p) => (p.$top ? 36 : 38)}px;
  padding-left: ${(p) => (p.$top ? 2 : 0)}px;
  border-bottom: 1px solid #4c4c58;
  background: linear-gradient(#ffffff 2px, #f2f2f9 4px, #cfcfe5 9px, #cfcfe5 28px, #a2a2b8 100%);
`;

const Grip = styled.span`
  width: 3px;
  height: 17px;
  flex: none;
  align-self: flex-start;
  margin: 4px 6px 0 ${(p) => (p.$lead ? 6 : 10)}px;
  border: 1px solid #fff;
  border-right-color: #909098;
  border-bottom-color: #909098;
`;

const Tool = styled.button`
  position: relative;
  flex: none;
  display: flex;
  align-items: center;
  width: ${(p) => (p.$narrow ? 22 : p.$menu ? 30 : 28)}px;
  height: 30px;
  padding: 2px 0 0 ${(p) => (p.$narrow ? 0 : 3)}px;
  border: 0;
  background: none;

  svg {
    overflow: visible;
    filter: drop-shadow(2px 3px 0 rgba(130, 130, 150, 0.22));
  }

  ${(p) =>
    p.$menu &&
    css`
      &::after {
        content: '';
        position: absolute;
        right: 0;
        bottom: 0;
        border: 4px solid transparent;
        border-top-color: #000;
        border-bottom: 0;
      }
    `}

  ${(p) =>
    p.$boxed &&
    css`
      &::after {
        box-shadow: 0 0 0 1px #fff;
        background: #fff;
        border-left-color: #fff;
        border-right-color: #fff;
      }
    `}
`;

const Divider = styled.span`
  width: 2px;
  height: 34px;
  margin: 0 3px;
  border-left: 1px solid #8c8c98;
  border-right: 1px solid #fff;
`;

/* ---------- combo boxes ---------- */

const ComboBox = styled.span`
  display: grid;
  align-items: center;
  width: ${(p) => p.$width}px;
  height: 23px;
  margin-right: ${(p) => (p.$last ? 0 : 4)}px;
  border: 2px solid #6e6e72;
  border-right: 1px solid #f4f4fa;
  border-bottom: 1px solid #f4f4fa;
  background: ${(p) => (p.$off ? '#f0f0f0' : '#fff')};
  color: ${(p) => (p.$off ? '#a0a0a4' : '#111')};

  > * { grid-area: 1 / 1; }
`;

const Select = styled.select`
  appearance: none;
  width: 100%;
  height: 20px;
  padding: 0 ${(p) => (p.$right ? 18 : 0)}px 0 3px;
  border: 0;
  outline: 0;
  background: transparent;
  text-align: ${(p) => (p.$right ? 'right' : 'left')};
  line-height: 18px;
  opacity: 1;
`;

const ComboArrow = styled.span`
  justify-self: end;
  display: flex;
  align-items: center;
  justify-content: center;
  width: 15px;
  height: 19px;
  border: 1px solid #fff;
  border-right-color: #77777c;
  border-bottom-color: #77777c;
  background: #f0f0f0;
  pointer-events: none;

  &::after {
    content: '';
    border: 4px solid transparent;
    border-top-color: ${(p) => (p.$off ? '#a0a0a4' : '#000')};
    border-bottom: 0;
  }
`;

const WeightBar = styled.span`
  width: 38px;
  height: 7px;
  margin-left: 6px;
  background: #000;
`;

const Combo = ({ label, value, width, off, weight, last }) => (
  <ComboBox $width={width} $off={off} $last={last}>
    <Select aria-label={label} disabled={off} $right={weight} defaultValue={value}>
      <option>{value}</option>
    </Select>
    {weight && <WeightBar />}
    <ComboArrow $off={off} />
  </ComboBox>
);

const ToolItem = ({ item }) => {
  const [name, label, kind] = item;
  return (
    <Tool
      type="button"
      aria-label={label}
      title={label}
      $menu={kind === 'menu' || kind === 'boxed'}
      $boxed={kind === 'boxed'}
      $narrow={kind === 'narrow'}
    >
      <Icon name={name} />
    </Tool>
  );
};

/* ---------- viewport ---------- */

const Middle = styled.div`
  flex: 1;
  display: flex;
  min-height: 0;
`;

const Viewport = styled.main`
  position: relative;
  flex: 1;
  overflow: hidden;
  border-top: 1px solid #77777c;
  border-left: 2px solid #88888c;
  background: linear-gradient(#333366, #474773 68%, #aeaec2);
`;

const Tree = styled.ul`
  position: relative;
  width: 200px;
  margin: 0;
  padding: 90px 0 0;
  list-style: none;
  color: #fff;
  font-size: 19px;
`;

const TreeRow = styled.li`
  display: flex;
  align-items: center;
  height: 39px;
`;

const TreeLabel = styled.span`
  padding: 1px 2px;
  border-radius: 2px;
  background: rgba(48, 48, 98, 0.7);
  line-height: 26px;
  white-space: nowrap;
`;

const TreeGlyph = styled.svg`
  flex: none;
  width: ${(p) => (p.$root ? 37 : 64)}px;
  height: 39px;
  overflow: visible;
`;

const ModelLayer = styled.svg`
  position: absolute;
  left: 638px;
  top: 301px;
  width: 640px;
  height: 370px;

  .edge { fill: none; stroke: #000; }
  path, ellipse, polygon { vector-effect: non-scaling-stroke; }
`;

const RightLayer = styled.svg`
  position: absolute;
  right: 0;
  top: ${(p) => p.$top}px;
  overflow: visible;
`;

const CornerAxis = styled.svg`
  position: absolute;
  right: 6px;
  bottom: 12px;
  overflow: visible;
`;

const ring =
  'M655 425C658 400 672 385 695 375C705 290 760 210 840 155C838 125 860 102 893 96C915 88 930 92 943 103C1020 65 1110 57 1200 67L1235 55C1285 52 1315 70 1310 105C1390 150 1435 220 1445 290C1475 290 1485 315 1480 335C1478 360 1460 380 1440 382C1420 470 1370 540 1297 592C1310 615 1290 652 1250 655C1225 658 1210 650 1205 645C1110 685 1010 692 920 680C900 695 860 695 840 680C825 668 822 655 828 645C770 610 720 550 692 460C665 460 655 445 655 425Z';

const bowl =
  'M745 455C765 520 800 570 855 605C900 590 935 610 945 640C1020 650 1110 645 1178 612C1178 580 1210 560 1240 558L1270 558C1330 520 1370 450 1390 382C1370 372 1355 345 1362 325C1366 312 1375 305 1385 300L1383 270C1365 215 1330 170 1283 145C1265 158 1215 158 1195 115C1120 100 1050 105 985 130L955 165C940 190 890 198 865 193C820 225 790 260 770 305C748 340 740 350 738 372C775 385 785 420 770 435C765 450 750 455 745 455Z';

const arms = [
  'M990 185L945 118Q915 95 900 105Q890 112 897 145',
  'M1102 180L1160 100Q1175 85 1200 80Q1240 55 1240 75L1252 105',
  'M1118 250L1240 240Q1260 236 1290 252L1370 285Q1410 300 1418 334',
  'M1082 300L1145 380L1210 525L1237 600',
  'M1012 312L950 400Q935 420 925 450L895 555L883 640',
  'M978 268L860 280Q835 280 820 295L745 345Q720 365 716 408',
];

const joints =
  'M968 125L947 147M935 102L928 128M1142 97L1165 125M1165 75L1182 108M1240 222L1237 255M1278 232L1270 265M1383 265L1378 300M1165 370L1128 395M1170 395L1140 415M1222 515L1197 530M937 387L968 405M920 428L950 442M877 552L912 565M857 265L860 298M820 277L830 308M728 340L745 367';

const Model = () => (
  <ModelLayer viewBox="0 0 1568 1110" preserveAspectRatio="none" role="img" aria-label="Part5 solid" strokeWidth="1.4">
    <defs>
      <linearGradient id="cone" x1="1110" y1="300" x2="1330" y2="345" gradientUnits="userSpaceOnUse">
        <stop offset="0" stopColor="#d860f0" />
        <stop offset="0.3" stopColor="#ff8cff" />
        <stop offset="0.48" stopColor="#e66cff" />
        <stop offset="0.65" stopColor="#9a20ff" />
        <stop offset="1" stopColor="#7c00f4" />
      </linearGradient>
      <linearGradient id="roll" x1="400" y1="840" x2="412" y2="900" gradientUnits="userSpaceOnUse">
        <stop offset="0" stopColor="#ff30ff" />
        <stop offset="1" stopColor="#98009c" />
      </linearGradient>
      <linearGradient id="corner">
        <stop offset="0" stopColor="#c400c4" />
        <stop offset="1" stopColor="#84008a" />
      </linearGradient>
      <linearGradient id="slotFace" x2="0" y2="1">
        <stop offset="0" stopColor="#900090" />
        <stop offset="0.6" stopColor="#d800d8" />
        <stop offset="0.75" stopColor="#ff40ff" />
        <stop offset="1" stopColor="#d000e0" />
      </linearGradient>
      <linearGradient id="hub">
        <stop offset="0" stopColor="#6200c4" />
        <stop offset="1" stopColor="#400080" />
      </linearGradient>
      <linearGradient id="flange">
        <stop offset="0" stopColor="#5000a4" />
        <stop offset="0.3" stopColor="#400084" />
        <stop offset="1" stopColor="#3c007a" />
      </linearGradient>
      <clipPath id="inBowl"><path d={bowl} /></clipPath>
    </defs>

    {/* lever */}
    <path d="M75 520C82 480 110 450 150 444L700 380L840 715L830 730L145 997L65 950L65 800Z" fill="#ff00ff" />
    <path d="M75 520C92 465 120 455 150 452L700 381M102 490L90 905M75 520L72 660M65 850L65 930M150 452L152 442" className="edge" />
    <path d="M102 490L105 470" className="edge" />
    <path d="M65 935C68 1000 100 1002 145 997L155 1070C100 1080 72 1065 72 1025Z" fill="url(#corner)" stroke="#000" />
    <path d="M145 997C380 920 600 815 840 733L1095 740L1113 862C800 915 600 950 155 1070Z" fill="#800080" stroke="#000" />
    <path d="M130 940C350 880 600 785 832 710L840 735C600 815 380 920 145 997Z" fill="url(#roll)" stroke="#000" />
    <path d="M65 950C65 925 80 920 95 937Q110 943 130 940L145 997C90 1005 65 985 65 950Z" fill="#e800e8" />
    <path d="M65 960C65 925 80 920 95 937Q110 943 130 940L145 997C95 1002 75 990 65 960" className="edge" />

    {/* window in the lever */}
    <path d="M135 610C135 570 165 540 205 533L392 481C402 480 407 485 406 495L400 745C399 757 392 763 382 765L190 818C165 820 133 812 132 780Z" fill="#860086" stroke="#000" />
    <path d="M152 710C162 680 190 657 222 654L398 635L400 745C399 757 392 763 382 765L190 818C170 820 155 815 150 803Z" fill="#464672" stroke="#000" />
    <path d="M205 533L222 654M395 481L402 550M135 610L153 720" className="edge" />

    {/* base cylinder and flange */}
    <path d="M1090 700L1113 862C1220 850 1325 770 1327 650L1290 580Z" fill="#420082" stroke="#000" />
    <path d="M700 480C705 590 750 680 840 718L900 650L760 470Z" fill="#5400ac" stroke="#000" />
    <path d={ring} transform="translate(10 66)" fill="url(#flange)" stroke="#000" />
    <path d="M840 680L845 735C870 760 910 755 925 740L920 680Z" fill="#5400ac" />
    <path d="M920 680L928 748M1205 645L1212 712M1297 592L1307 655M1440 382L1452 440M692 460L700 525M730 555L738 615" className="edge" />
    <path d={ring} fill="#7800f2" stroke="#000" strokeWidth="1.6" />
    <path d={bowl} fill="#5600b8" />

    <g clipPath="url(#inBowl)">
      <path d="M770 300L980 270L1010 380L940 480L930 620L800 600L740 480Z" fill="#5e00c6" />
      <path d="M860 120L990 110L985 250L770 310Z" fill="#48009a" />
      <path d="M985 100L1210 90L1220 190L1110 190Z" fill="#4c009e" />
      <path d="M1110 185L1205 188L1225 215L1370 300L1255 440C1210 395 1150 385 1110 385Z" fill="url(#cone)" />
      <path d="M1283 145L1283 215L1370 260L1390 240Z" fill="#5200ae" />
      <path d="M1365 300L1255 440L1270 560L1400 480L1392 330Z" fill="#8000ff" />
      <path d="M865 193L875 250C900 255 960 240 970 215L965 160Z" fill="#460092" stroke="#000" />
      <path d="M1195 115L1200 185C1215 220 1270 222 1293 208L1283 145Z" fill="#460092" stroke="#000" />
      <path d="M768 435L785 465Q788 495 760 510L745 455Z" fill="#4a009a" stroke="#000" />
      <path d="M1362 340Q1365 400 1380 425L1392 380Z" fill="#4a009a" stroke="#000" />
      <path d="M940 480C980 405 1090 370 1180 390C1240 402 1280 460 1270 560L1180 660L945 650L918 590Z" fill="#400084" stroke="#000" />
      <path d="M950 645C975 595 1040 548 1110 546L1215 552L1178 612L1170 660L960 660Z" fill="#454572" stroke="#000" />
      <path d="M985 130L1115 180L1205 188M770 305Q820 275 850 245M1365 300L1255 440M1283 215L1383 270M865 193Q800 250 770 305M785 400Q810 350 835 310" className="edge" />
    </g>
    <path d={bowl} className="edge" />
    <path d="M975 493C1002 495 1000 530 985 560C970 590 960 605 945 609C920 610 918 580 923 553C930 520 950 495 975 493Z" fill="url(#slotFace)" stroke="#000" />
    <path d="M945 609L943 632L965 612" className="edge" />

    {/* hub and spokes */}
    <path d="M982 220L1000 360C1015 395 1090 400 1132 370L1112 215Z" fill="url(#hub)" />
    <path d="M1000 370C1015 395 1075 395 1090 388M1018 320L1027 388M1132 290L1132 335" className="edge" />
    {arms.map((d) => (
      <g key={d} fill="none" strokeLinecap="round" strokeLinejoin="round">
        <path d={d} stroke="#000" strokeWidth="14" />
        <path d={d} stroke="#45008c" strokeWidth="11" />
        <path d={d} stroke="#5a00b8" strokeWidth="7" />
        <path d={d} stroke="#6c08d4" strokeWidth="3" />
      </g>
    ))}
    <path d={joints} className="edge" />
    <ellipse cx="1043" cy="209" rx="68" ry="57" fill="#7800f2" stroke="#000" strokeWidth="1.6" />

    {/* reference planes */}
    <polygon points="70,662 97,800 92,960 66,800" fill="none" stroke="#ff8080" strokeWidth="3" />
    <polygon points="590,603 615,760 609,899 584,740" fill="none" stroke="#ffff00" strokeWidth="3" />
    <g fill="none" stroke="#fff">
      <polygon points="1020,627 1192,607 1215,762 1045,781" />
      <polygon points="1033,634 1204,616 1202,753 1030,772" />
      <polygon points="1108,547 1132,705 1128,842 1103,690" />
    </g>
  </ModelLayer>
);

const Compass = () => (
  <RightLayer $top={20} width="109" height="90" viewBox="0 0 109 90" aria-label="Compass">
    <g fill="#1c4a68" stroke="#dcc8ff" strokeWidth="1.6">
      <path d="M22 13C42 15 54 23 60 35L28 38Z" />
      <path d="M12 50C22 47 36 48 50 46C60 60 48 78 24 76C18 76 12 74 12 71Z" />
      <path d="M20 6L23 50L26 58L30 54L26 36L21 12" fill="none" />
    </g>
    <circle cx="19.500" cy="6" r="3.500" fill="#dcc8ff" />
    <path d="M26 54h9v9h-9z" fill="#d40000" />
    <g fill="#f0f000" fontSize="13">
      <text x="26" y="11">z</text>
      <text x="66" y="41">y</text>
      <text x="33" y="65">x</text>
    </g>
  </RightLayer>
);

const Shapes = () => (
  <RightLayer $top={288} width="169" height="305" viewBox="0 0 169 305" aria-hidden="true">
    <defs>
      <linearGradient id="glass" x1="0" y1="0.300" x2="1" y2="0.800">
        <stop offset="0" stopColor="#4a4876" />
        <stop offset="0.400" stopColor="#56547f" />
        <stop offset="1" stopColor="#423f74" />
      </linearGradient>
    </defs>
    <g fill="url(#glass)" stroke="#8888ac" strokeWidth="9">
      <circle cx="83" cy="56" r="51" />
      <rect x="37" y="127" width="92" height="92" />
      <rect x="12" y="239" width="141" height="56" />
    </g>
    <g fill="#7c7ba2">
      <circle cx="73" cy="82" r="10" />
      <path d="M49 193h16v16H49zM17 265l123 19H17z" />
    </g>
  </RightLayer>
);

/* ---------- floating toolbars ---------- */

const Palette = styled.section`
  position: absolute;
  right: ${(p) => p.$right}px;
  top: ${(p) => p.$top}px;
  width: ${(p) => p.$width}px;
  padding: 1px 5px 5px;
  border: 1px solid #0c0c14;
  box-shadow: inset 0 0 0 1px #f4f6fa, 2px 3px 10px 3px rgba(10, 10, 25, 0.75);
  background: linear-gradient(100deg, #b4b9c8, #98a1b4 30%, #5e6888 52%, #8e96ac 72%, #9ba3b6);

  ${Tool} {
    height: 28px;
    padding-top: 0;
  }
`;

const PaletteHead = styled.div`
  display: flex;
  align-items: center;
  justify-content: space-between;
  height: 22px;
`;

const PaletteTitle = styled.h2`
  margin: 0;
  padding: 0 0 1px 2px;
  font-family: Roboto, "Noto Sans", sans-serif;
  font-size: 12px;
  line-height: 18px;
  font-weight: 400;
  white-space: nowrap;
`;

const CloseButton = styled.button`
  display: flex;
  align-items: center;
  justify-content: center;
  width: 16px;
  height: 16px;
  padding: 0;
  border: 1px solid #5a3038;
  border-radius: 2px;
  box-shadow: inset 0 0 0 1px #f0a898;
  background: linear-gradient(#e89c88, #d8684c 48%, #c03c1c 52%, #d86840);
`;

const PaletteBody = styled.div`
  display: flex;
  flex-direction: ${(p) => (p.$vertical ? 'column' : 'row')};
  align-items: center;
  height: ${(p) => (p.$vertical ? 47 : 39)}px;
  border: 1px solid #000;
  outline: 1px solid #fff;
  background: ${(p) =>
    p.$vertical
      ? 'linear-gradient(90deg, #fff, #cfcfe5 25%, #cfcfe5 75%, #a2a2b8)'
      : 'linear-gradient(#fff 3px, #cfcfe5 11px, #cfcfe5 26px, #a2a2b8)'};
`;

const PaletteGrip = styled(Grip)`
  margin: 4px 5px 0 5px;
`;

const FlatGrip = styled.span`
  flex: none;
  width: 17px;
  height: 3px;
  align-self: flex-start;
  margin: ${(p) => (p.$side ? '6px 0 4px 4px' : '5px 0 5px 4px')};
  border: 1px solid #fff;
  border-right-color: #909098;
  border-bottom-color: #909098;
`;

const Cross = ({ color = '#fff', size = 8 }) => (
  <svg width={size} height={size} viewBox="0 0 8 8" aria-hidden="true">
    <path d="M1 1l6 6M7 1L1 7" stroke="#444" strokeWidth="3.200" opacity="0.600" />
    <path d="M1 1l6 6M7 1L1 7" stroke={color} strokeWidth="2" />
  </svg>
);

const palettes = [
  {
    title: 'Sk...', right: 429, top: 112, width: 51, vertical: true,
    groups: [[['sketch', 'Sketch', 'menu']]],
  },
  {
    title: 'Sketch-Based Features', right: 157, top: 192, width: 316,
    groups: [[
      ['pad', 'Pad', 'menu'], ['pocket', 'Pocket', 'menu'], ['shaft', 'Shaft'], ['groove', 'Groove'],
      ['hole', 'Hole'], ['rib', 'Rib'], ['slot', 'Slot'], ['stiffener', 'Stiffener', 'menu'],
      ['loftAdd', 'Multi-sections Solid'], ['loftCut', 'Removed Multi-sections Solid'],
    ]],
  },
  {
    title: 'Dress-Up Features', right: 242, top: 264, width: 231,
    groups: [[
      ['fillet', 'Edge Fillet', 'menu'], ['chamfer', 'Chamfer'], ['draftAngle', 'Draft Angle', 'menu'],
      ['shell', 'Shell'], ['thickness', 'Thickness'], ['thread', 'Thread/Tap'], ['removeFace', 'Remove Face', 'menu'],
    ]],
  },
  {
    title: 'Transformation Features', right: 318, top: 331, width: 164,
    groups: [
      [['translate', 'Translation', 'menu']],
      [['mirror', 'Mirror'], ['pattern', 'Circular Pattern', 'menu']],
      [['scale', 'Scaling', 'menu']],
    ],
  },
  {
    title: 'S...', right: 231, top: 336, width: 51, vertical: true,
    groups: [[['surface', 'Thick Surface', 'menu']]],
  },
  {
    title: 'Reference Ele...', right: 365, top: 410, width: 114,
    groups: [[['point', 'Point'], ['line', 'Line'], ['plane', 'Plane']]],
  },
  {
    title: 'View', right: 128, top: 511, width: 371,
    groups: [[
      ['fly', 'Fly Mode'], ['fitAll', 'Fit All In'], ['pan', 'Pan'], ['rotate', 'Rotate'],
      ['zoomIn', 'Zoom In'], ['zoomOut', 'Zoom Out'], ['normalView', 'Normal View'],
      ['multiView', 'Create Multi-View'], ['isoView', 'Isometric View', 'menu'],
      ['shading', 'Shading with Edges', 'boxed'], ['hideShow', 'Hide/Show'], ['swapSpace', 'Swap Visible Space'],
    ]],
  },
];

const FloatingPalette = ({ title, right, top, width, vertical, groups }) => (
  <Palette $right={right} $top={top} $width={width}>
    <PaletteHead>
      <PaletteTitle>{title}</PaletteTitle>
      <CloseButton type="button" aria-label={`Close ${title}`}><Cross /></CloseButton>
    </PaletteHead>
    <PaletteBody $vertical={vertical}>
      {vertical ? <FlatGrip /> : <PaletteGrip />}
      {groups.map((group, i) => (
        <React.Fragment key={group[0][0]}>
          {i > 0 && <Divider />}
          {group.map((item) => <ToolItem key={item[0]} item={item} />)}
        </React.Fragment>
      ))}
    </PaletteBody>
  </Palette>
);

/* ---------- side bar, bottom bar, status ---------- */

const SideBar = styled.aside`
  width: 38px;
  flex: none;
  border-left: 1px solid #fff;
  background: linear-gradient(90deg, #fff 3px, #cfcfe5 10px, #cfcfe5 28px, #a2a2b8);
`;

const SideGroup = styled.div`
  display: flex;
  flex-direction: column;
  padding-bottom: ${(p) => (p.$loose ? 9 : 0)}px;

  ${Tool} {
    height: ${28}px;
    margin-left: 4px;
  }
  ${Tool}[data-menu] { margin-bottom: 4px; }
`;

const SideTool = styled.div`
  height: ${(p) => (p.$menu ? 32 : 28)}px;
`;

const sideGroups = [
  [['gear', 'Part Design']],
  [['select', 'Select', 'menu']],
  [['dimGray', 'Constraints Dialog'], ['dim', 'Constraint']],
  [['abc', 'Text with Leader', 'menu'], ['flag', 'Flag Note', 'menu'], ['stamp', 'Datum']],
  [['tapeSelect', 'Select Body'], ['tapeBolt', 'Quick Update'], ['tapeLens', 'Inspect Body']],
];

const bottomGroups = [
  [
    ['newFile', 'New'], ['open', 'Open'], ['save', 'Save'], ['print', 'Print'], ['cut', 'Cut'], ['copy', 'Copy'],
    ['paste', 'Paste'], ['undo', 'Undo', 'menu'], ['redo', 'Redo', 'menu'], ['whatsThis', "What's This?"],
  ],
  [
    ['fx', 'Formula'], ['bubble', 'Comment'], ['link', 'Link', 'narrow'], ['table', 'Design Table', 'menu'],
    ['relations', 'Relations'], ['lock', 'Lock', 'menu'], ['brace', 'Equivalent Dimensions'],
  ],
  [['catalog', 'Catalog Browser']],
  [['ruler', 'Measure Between'], ['clamp', 'Measure Item'], ['weight', 'Measure Inertia']],
  [['camera', 'Capture']],
  [
    ['update', 'Update All'], ['hand', 'Manual Update'], ['axis', 'Axis System'], ['decimals', 'Mean Dimensions'],
    ['cyanPart', 'Create Datum', 'menu'], ['bolt', 'Only Current Operated Solid'], ['stack', 'Body List', 'menu'],
    ['book', 'Current Body'],
  ],
  [['draft1', 'Draft Analysis'], ['curvature', 'Curvature Analysis'], ['tap', 'Tap Analysis']],
  [['paint', 'Apply Material', 'menu'], ['replace', 'Replace', 'menu']],
];

const BrandMark = styled.svg`
  margin: 0 7px 0 auto;
  align-self: flex-start;
  overflow: visible;
`;

const StatusBar = styled.footer`
  display: flex;
  align-items: center;
  height: 24px;
  padding-left: 4px;
`;

const StatusText = styled.span`
  flex: 1;
  line-height: 20px;
`;

const CommandInput = styled.input`
  width: 300px;
  height: 19px;
  padding: 0 3px;
  border: 2px solid #77777c;
  border-right: 1px solid #e8e8f0;
  border-bottom: 1px solid #e8e8f0;
  background: #fff;
`;

const StatusButton = styled.button`
  display: flex;
  align-items: center;
  justify-content: center;
  width: 33px;
  height: 21px;
  margin-left: 1px;
  padding: 0;
  border: 1px solid #fff;
  border-right: 2px solid #77777c;
  border-bottom: 2px solid #77777c;
  background: #cfcfe5;
`;

const menus = [
  ['S', 'tart'], ['', 'ENOVIA V5 VPM'], ['F', 'ile'], ['E', 'dit'], ['V', 'iew'],
  ['I', 'nsert'], ['T', 'ools'], ['W', 'indow'], ['H', 'elp'],
];

const combos = [
  { label: 'Fill colour', value: 'Automatic', width: 83 },
  { label: 'Transparency', value: 'Auto', width: 83 },
  { label: 'Line weight', value: '7', width: 83, weight: true },
  { label: 'Line type', value: 'Auto', width: 83 },
  { label: 'Point symbol', value: 'Auto', width: 51 },
  { label: 'Rendering style', value: 'Auto', width: 51, off: true },
  { label: 'Layer', value: 'None', width: 83 },
];

const planes = ['xy plane', 'yz plane', 'zx plane'];

const gearTeeth =
  'M-2-13H2V-9L5-8L8-11L11-8L8-5L9-2H13V2H9L8 5L11 8L8 11L5 8L2 9V13H-2V9L-5 8L-8 11L-11 8L-8 5L-9 2H-13V-2H-9L-8-5L-11-8L-8-11L-5-8L-2-9Z';

const SpecTree = () => (
  <Tree>
    <TreeRow>
      <TreeGlyph $root>
        <path d="M11 0h16l6 6v18H11z" fill="#fff" stroke="#109aa0" strokeWidth="2" />
        <path d="M24 0v7h9" fill="#40e8ff" stroke={N} />
        <g transform="translate(14 22) scale(0.800)"><path d={gearTeeth} fill="#555" /></g>
        <g transform="translate(9 21) scale(0.750)">
          <path d={gearTeeth} fill="#ffe890" />
          <circle r="4" fill="#ffe030" stroke={N} strokeWidth="2" />
        </g>
        <path d="M11 29v10" stroke="#fff" strokeWidth="2" />
      </TreeGlyph>
      <TreeLabel>Part5</TreeLabel>
    </TreeRow>
    {planes.map((name) => (
      <TreeRow key={name}>
        <TreeGlyph>
          <path d="M11 0v39M11 18h17" stroke="#fff" strokeWidth="2" fill="none" />
          <path d="M29 26l10-10h20l-9 10z" fill={T} />
          <path d="M30 24l10-10h18l-9 10z" fill="#ffe890" stroke={N} strokeWidth="1.500" />
        </TreeGlyph>
        <TreeLabel>{name}</TreeLabel>
      </TreeRow>
    ))}
    <TreeRow>
      <TreeGlyph>
        <path d="M11 0v18M11 19h17" stroke="#fff" strokeWidth="2" fill="none" />
        <circle cx="11" cy="18" r="8" fill="#909094" />
        <circle cx="9" cy="15" r="4" fill="#d0d0d4" />
        <path d="M11 12v12M5 18h12" stroke="#000" strokeWidth="3" />
        <g transform="translate(47 18) scale(1.100)"><path d={gearTeeth} fill={N} /></g>
        <g transform="translate(42 18)">
          <path d="M2-14l12 4 3 4v12l-3 4-12 4z" fill="#109aa0" />
          <path d="M4-8h12M4-3h13M4 3h13M4 8h12" stroke={N} strokeWidth="2" />
          <path d={gearTeeth} fill={C} />
          <path d="M-6-6h4v3h-4zM3-8h4v4H3zM-8 3h4v4h-4zM2 5h4v4H2z" fill="#f8f020" />
          <circle r="4" fill="#f8f020" stroke={N} strokeWidth="2" />
        </g>
      </TreeGlyph>
      <TreeLabel>PartBody</TreeLabel>
    </TreeRow>
  </Tree>
);

export default function App() {
  return (
    <Screen>
      <GlobalStyle />
      <TitleBar>
        <LogoBox><Icon name="logo" size={13} /></LogoBox>
        <TitleText>CATIA V5 - [Part5]</TitleText>
        <FrameButtons>
          <FrameButton type="button" aria-label="Minimize" $first>
            <svg width="12" height="5"><path d="M.500.500h11v4H.500z" fill="#fff" stroke="#334" /></svg>
          </FrameButton>
          <FrameButton type="button" aria-label="Restore">
            <svg width="13" height="13">
              <path d="M4 1h8v8H4z" fill="#fff" stroke="#334" />
              <path d="M1 4h8v8H1z" fill="#fff" stroke="#334" />
              <path d="M4 7h2v2H4z" fill="#7890a8" stroke="#334" />
            </svg>
          </FrameButton>
          <FrameButton type="button" aria-label="Close" $close><Cross size={11} /></FrameButton>
        </FrameButtons>
      </TitleBar>

      <MenuBar>
        <MenuLogo><Icon name="logo" size={19} /></MenuLogo>
        {menus.map(([key, rest], i) => (
          <MenuItem type="button" key={rest} $active={i === 0} $tight={i === 1}>
            {key && <u>{key}</u>}{rest}
          </MenuItem>
        ))}
        <ChildButtons>
          <ChildButton type="button" aria-label="Minimize document">
            <svg width="8" height="8"><path d="M1 6h6" stroke="#708090" strokeWidth="2" /></svg>
          </ChildButton>
          <ChildButton type="button" aria-label="Restore document">
            <svg width="9" height="9"><path d="M3 3V1h5v4H6M1 4h5v4H1zM1 4.500h5" fill="none" stroke="#708090" /></svg>
          </ChildButton>
          <ChildButton type="button" aria-label="Close document">
            <svg width="8" height="8"><path d="M1 1l6 6M7 1L1 7" stroke="#708090" strokeWidth="2" /></svg>
          </ChildButton>
        </ChildButtons>
      </MenuBar>

      <Strip $top>
        <Grip $lead />
        {combos.map((combo, i) => <Combo key={combo.label} {...combo} last={i === 6} />)}
        <ToolItem item={['brush', 'Painter']} />
        <ToolItem item={['wand', 'Properties Wizard']} />
      </Strip>

      <Middle>
        <Viewport>
          <SpecTree />
          <Model />
          <Compass />
          <Shapes />
          {palettes.map((palette) => <FloatingPalette key={palette.title} {...palette} />)}
          <CornerAxis width="32" height="36" viewBox="0 0 32 36" aria-label="Axis">
            <path d="M6 10v22M6 20h12" stroke="#fff" fill="none" />
            <g fill="#fff" fontSize="12">
              <text x="3" y="8">z</text>
              <text x="22" y="22">y</text>
              <text x="6" y="32">x</text>
            </g>
          </CornerAxis>
        </Viewport>
        <SideBar>
          {sideGroups.map((group, i) => (
            <SideGroup key={group[0][0]} $loose={i === 0}>
              <FlatGrip $side />
              {group.map((item) => (
                <SideTool key={item[0]} $menu={item[2] === 'menu'}>
                  <ToolItem item={item} />
                </SideTool>
              ))}
            </SideGroup>
          ))}
        </SideBar>
      </Middle>

      <Strip>
        {bottomGroups.map((group, i) => (
          <React.Fragment key={group[0][0]}>
            <Grip $lead={i === 0} />
            {group.map((item) => <ToolItem key={item[0]} item={item} />)}
            {i === 5 && <Combo label="Current body" value="PartBody" width={228} last />}
          </React.Fragment>
        ))}
        <BrandMark width="40" height="32" viewBox="0 0 40 32" aria-label="CATIA">
          <path d="M9 2h8l-4 5c4 0 3 4-3 5" fill="none" stroke="#e02828" strokeWidth="2" />
          <path d="M5 14c8-2 7 8-4 9L5 14" fill="none" stroke="#3c2890" strokeWidth="2" />
          <path d="M24 11c-8-1-9 3-5 5s2 6-5 6" fill="none" stroke="#f0a010" strokeWidth="2.200" />
          <text x="7" y="30" fontFamily="Liberation Sans, sans-serif" fontStyle="italic" fontWeight="700" fontSize="10" fill="#3c2890">CATIA</text>
        </BrandMark>
      </Strip>

      <StatusBar>
        <StatusText>Select an object or a command</StatusText>
        <CommandInput aria-label="Power input" />
        <StatusButton type="button" aria-label="Dialog position">
          <svg width="18" height="14">
            <path d="M3 2h7v6H3zM12 9h2" fill="none" stroke="#909098" strokeWidth="1.500" />
            <path d="M1 13h15V2" fill="none" stroke="#909098" strokeWidth="2" />
          </svg>
        </StatusButton>
        <StatusButton type="button" aria-label="Information">
          <svg width="18" height="14">
            <circle cx="8" cy="6" r="5" fill="none" stroke="#909098" strokeWidth="1.500" />
            <path d="M8 3v1M8 5v4M6 9h4" stroke="#909098" strokeWidth="1.500" />
            <path d="M1 13h15V2" fill="none" stroke="#909098" strokeWidth="2" />
          </svg>
        </StatusButton>
      </StatusBar>
    </Screen>
  );
}
